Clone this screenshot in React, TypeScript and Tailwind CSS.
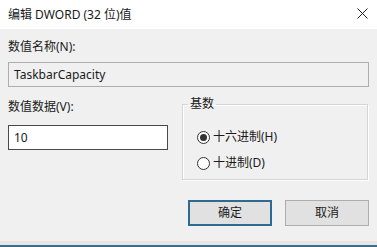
import React from 'react';

const FONT = { fontFamily: '"Noto Sans", "Noto Sans CJK SC", sans-serif' };

const Radio: React.FC<{ checked?: boolean; label: string }> = ({ checked, label }) => (
  <label className="flex items-center h-4 gap-[3px] text-[12px] leading-4 text-[#1a1a1a]">
    <span className="w-[13px] h-[13px] rounded-full border border-[#333] bg-white flex items-center justify-center">
      {checked && <span className="w-[7px] h-[7px] rounded-full bg-[#333]" />}
    </span>
    <span>{label}</span>
  </label>
);

export default function App() {
  return (
    <div className="w-[377px] h-[247px] overflow-hidden flex flex-col bg-[#f0f0f0] text-black" style={FONT}>
      {/* title bar */}
      <div className="h-[29px] bg-white flex items-center justify-between pl-2 pr-[9px] shrink-0">
        <span className="text-[12px] leading-4 text-[#1a1a1a]">编辑 DWORD (32 位)值</span>
        <svg width="11" height="11" viewBox="0 0 11 11" className="mb-[2px]">
          <path d="M0.5 0.5 L10.5 10.5 M10.5 0.5 L0.5 10.5" stroke="#222" strokeWidth="1" />
        </svg>
      </div>

      <div className="flex-1 px-2 pt-[10px]">
        <div className="h-4 leading-4 text-[12px] text-[#1a1a1a]">数值名称(N):</div>
        <div className="mt-[7px] h-[25px] w-[361px] border border-[#adadad] bg-[#f0f0f0] px-[5px] flex items-center text-[12px] text-[#1a1a1a]">
          TaskbarCapacity
        </div>

        <div className="flex mt-[9px]">
          <div className="w-[160px]">
            <div className="mt-[3px] h-4 leading-4 text-[12px] text-[#1a1a1a]">数值数据(V):</div>
            <div className="mt-[10px] h-[25px] border border-[#4a4a4a] bg-white px-[5px] flex items-center text-[12px] text-[#1a1a1a]">
              10
            </div>
          </div>
          <fieldset className="ml-[14px] w-[186px] h-[84px] border border-[#d5d5d5] shadow-[inset_1px_1px_0_#fff,1px_1px_0_#fff]">
            <legend className="ml-[5px] px-[2px] text-[12px] leading-4 text-[#1a1a1a]">基数</legend>
            <div className="pl-[14px] pt-[17px] flex flex-col gap-[10px]">
              <Radio checked label="十六进制(H)" />
              <Radio label="十进制(D)" />
            </div>
          </fieldset>
        </div>

        <div className="flex justify-end gap-[13px] mt-[20px]">
          <button className="w-[84px] h-[26px] border-2 border-[#2f6a93] bg-[#e1e1e1] text-[12px] text-[#1a1a1a]">确定</button>
          <button className="w-[84px] h-[26px] border border-[#adadad] bg-[#e1e1e1] text-[12px] text-[#1a1a1a]">取消</button>
        </div>
      </div>

      <div className="shrink-0 flex flex-col">
        <div className="h-[2px] bg-[#f4dede]" />
        <div className="h-[2px] bg-[#d6ecf7]" />
        <div className="h-[2px] bg-[#3f6f80]" />
      </div>
    </div>
  );
}
